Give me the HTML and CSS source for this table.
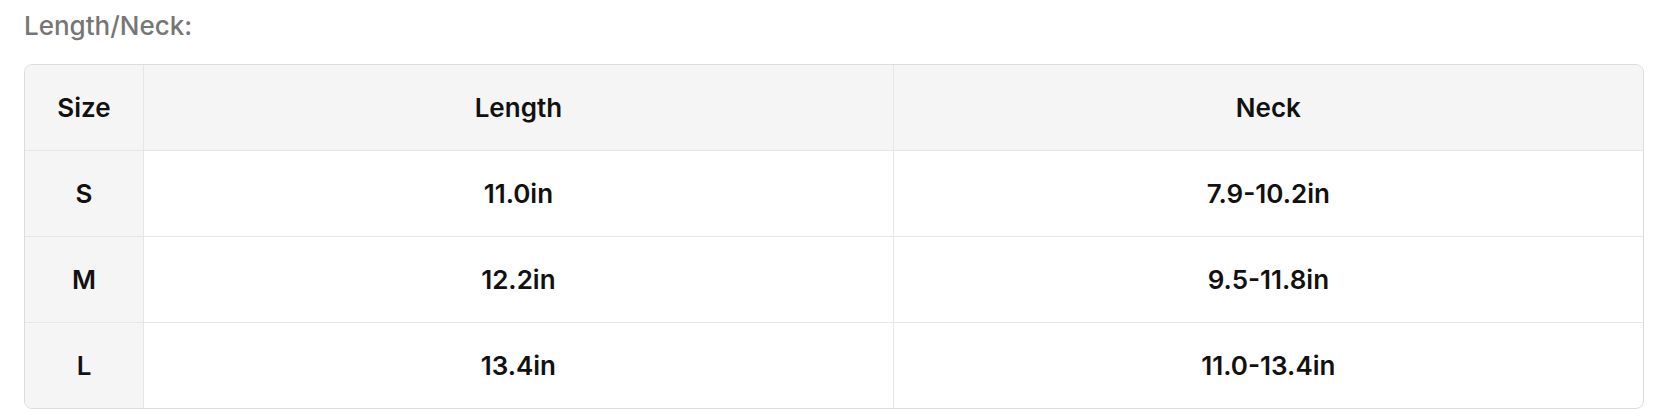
FILE: index.html
```html
<!DOCTYPE html>
<html>
<head>
<meta charset="utf-8">
<link rel="stylesheet" href="styles.css">
</head>
<body>
<div class="page">
  <div class="title">Length/Neck:</div>
  <div class="table-wrap">
    <table class="size-table">
      <thead>
        <tr><th class="size-col">Size</th><th>Length</th><th>Neck</th></tr>
      </thead>
      <tbody>
        <tr><td class="size-col">S</td><td>11.0in</td><td>7.9-10.2in</td></tr>
        <tr><td class="size-col">M</td><td>12.2in</td><td>9.5-11.8in</td></tr>
        <tr class="last"><td class="size-col">L</td><td>13.4in</td><td>11.0-13.4in</td></tr>
      </tbody>
    </table>
  </div>
</div>
</body>
</html>
```
FILE: styles.css
```css
html, body {
  margin: 0;
  padding: 0;
  background: #ffffff;
}
.page {
  padding: 11px 24px 0 24px;
  font-family: Inter, "Noto Sans", sans-serif;
}
.title {
  font-size: 26px;
  font-weight: 500;
  color: #767676;
  line-height: 30px;
  height: 30px;
}
.table-wrap {
  margin-top: 23px;
  border: 1px solid #dcdcdc;
  border-radius: 8px;
  overflow: hidden;
}
.size-table {
  width: 100%;
  border-collapse: collapse;
  table-layout: fixed;
}
.size-table th,
.size-table td {
  height: 85px;
  padding: 0;
  text-align: center;
  vertical-align: middle;
  font-size: 26px;
  font-weight: 600;
  color: #111111;
  border-right: 1px solid #e6e6e6;
  border-bottom: 1px solid #e6e6e6;
}
.size-table th:last-child,
.size-table td:last-child {
  border-right: none;
}
.size-table tr.last td {
  border-bottom: none;
}
.size-table thead th {
  background: #f5f5f5;
}
.size-table .size-col {
  width: 118px;
  background: #f5f5f5;
}
```
